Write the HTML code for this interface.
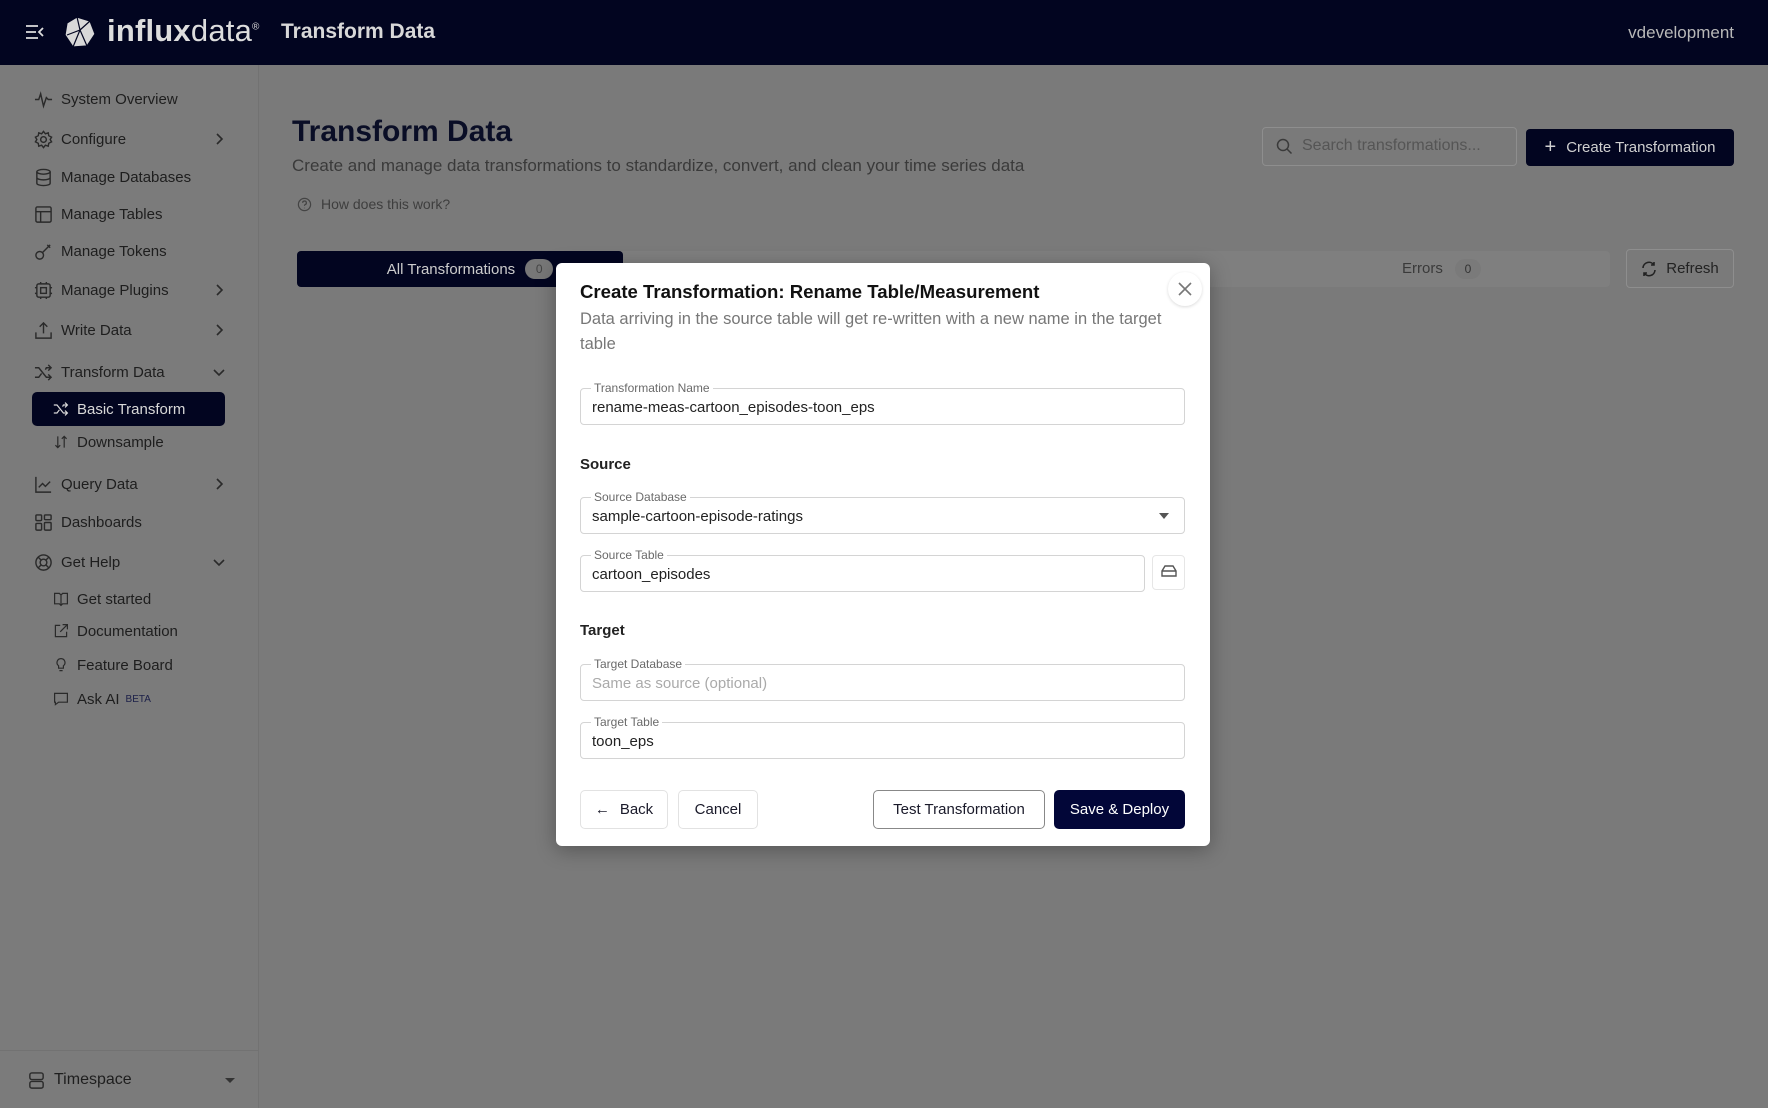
<!DOCTYPE html>
<html><head><meta charset="utf-8"><style>
*{box-sizing:border-box;margin:0;padding:0}
body{width:1768px;height:1108px;overflow:hidden;background:#7a7a7a;font-family:"Liberation Sans",sans-serif;position:relative;color:#1c1c1c}
.a{position:absolute}
.hdr{left:0;top:0;width:1768px;height:65px;background:#020520}
.side{left:0;top:65px;width:259px;height:1043px;background:#7b7b7b;border-right:1px solid #727272}
.nav{position:absolute;left:34px;font-size:15px;color:#1e1e1e;display:flex;align-items:center;height:20px;transform:translateY(-50%)}
.nav svg{width:19px;height:19px;margin-right:8px;stroke:#2a2a2a;fill:none;stroke-width:1.5}
.sub{left:53px}
.sub svg{width:16px;height:16px}
.chev{position:absolute;left:212px;width:14px;height:14px;transform:translateY(-50%);stroke:#2a2a2a;fill:none;stroke-width:1.6}
.field{position:absolute;left:580px;width:605px;height:37px;border:1px solid #d4d4d4;border-radius:4px;background:#fff}
.field .lb{position:absolute;left:10px;top:-8px;background:#fff;padding:0 3px;font-size:12px;color:#6a6a6a;line-height:14px}
.field .v{position:absolute;left:11px;top:10px;font-size:15px;color:#222}
.btn{position:absolute;top:790px;height:39px;border:1px solid #e2e2e2;border-radius:5px;font-size:15px;display:flex;align-items:center;justify-content:center;color:#1a1a2a;background:#fff}
</style></head><body>
<div class="a hdr">
 <svg class="a" style="left:25px;top:24px" width="20" height="16" viewBox="0 0 20 16" stroke="#ddd" stroke-width="1.8" fill="none"><path d="M1 2h12M1 8h10M1 14h12M18 4l-4 4 4 4"/></svg>
 <svg class="a" style="left:63px;top:15px" width="34" height="34" viewBox="0 0 34 34" fill="#d8d8d8" stroke="#020520" stroke-width="1.2"><path d="M14 2l13 4 5 13-8 12-14 1L2 20 4 8z"/><path d="M14 2l3 13-13 5M17 15l10-9M17 15l7 16M17 15l-7 17" fill="none"/></svg>
 <div class="a" style="left:107px;top:13px;font-size:31px;color:#ddd;letter-spacing:0.2px"><b>influx</b>data<sup style="font-size:10px">®</sup></div>
 <div class="a" style="left:281px;top:20px;font-size:21px;font-weight:bold;color:#d8d8d8">Transform Data</div>
 <div class="a" style="right:34px;top:23px;font-size:17px;color:#b8b8b8">vdevelopment</div>
</div>
<div class="a side"></div>
<div class="nav" style="top:99px"><svg viewBox="0 0 20 20"><path d="M1 10h4l2-6 3 13 3-9 2 2h4"/></svg>System Overview</div>
<div class="nav" style="top:139px"><svg viewBox="0 0 20 20"><circle cx="10" cy="10" r="3"/><path d="M10 1.5l2 2.5 3-1 .5 3 3 1.5-1.5 2.5 1.5 2.5-3 1.5-.5 3-3-1-2 2.5-2-2.5-3 1-.5-3-3-1.5L3 10 1.5 7.5l3-1.5.5-3 3 1z"/></svg>Configure</div>
<svg class="chev" style="top:139px" viewBox="0 0 14 14"><path d="M5 2l5 5-5 5"/></svg>
<div class="nav" style="top:177px"><svg viewBox="0 0 20 20"><ellipse cx="10" cy="4" rx="7" ry="2.5"/><path d="M3 4v12c0 1.4 3 2.5 7 2.5s7-1.1 7-2.5V4M3 10c0 1.4 3 2.5 7 2.5s7-1.1 7-2.5"/></svg>Manage Databases</div>
<div class="nav" style="top:214px"><svg viewBox="0 0 20 20"><rect x="2" y="2" width="16" height="16" rx="1.5"/><path d="M2 7h16M7 7v11"/></svg>Manage Tables</div>
<div class="nav" style="top:251px"><svg viewBox="0 0 20 20"><circle cx="6" cy="14" r="4"/><path d="M9 11l8-8M14 3l3 3"/></svg>Manage Tokens</div>
<div class="nav" style="top:290px"><svg viewBox="0 0 20 20"><rect x="3" y="3" width="14" height="14" rx="2"/><rect x="7" y="7" width="6" height="6"/><path d="M7 1v2M13 1v2M7 17v2M13 17v2M1 7h2M1 13h2M17 7h2M17 13h2"/></svg>Manage Plugins</div>
<svg class="chev" style="top:290px" viewBox="0 0 14 14"><path d="M5 2l5 5-5 5"/></svg>
<div class="nav" style="top:330px"><svg viewBox="0 0 20 20"><path d="M10 13V2M6 6l4-4 4 4M2 12v6h16v-6"/></svg>Write Data</div>
<svg class="chev" style="top:330px" viewBox="0 0 14 14"><path d="M5 2l5 5-5 5"/></svg>
<div class="nav" style="top:372px"><svg viewBox="0 0 20 20"><path d="M1 5h4l8 10h5M1 15h4l3-4M12 7l1-2h5M15 2l3 3-3 3M15 12l3 3-3 3"/></svg>Transform Data</div>
<svg class="chev" style="top:372px" viewBox="0 0 14 14"><path d="M2 5l5 5 5-5"/></svg>
<div class="a" style="left:32px;top:392px;width:193px;height:34px;background:#020520;border-radius:5px"></div>
<div class="nav sub" style="top:409px;color:#d8d8d8"><svg viewBox="0 0 20 20" style="stroke:#d8d8d8"><path d="M1 5h4l8 10h5M1 15h4l3-4M12 7l1-2h5M15 2l3 3-3 3M15 12l3 3-3 3"/></svg>Basic Transform</div>
<div class="nav sub" style="top:442px"><svg viewBox="0 0 20 20"><path d="M6 3v14M3 14l3 3 3-3M14 17V3M11 6l3-3 3 3"/></svg>Downsample</div>
<div class="nav" style="top:484px"><svg viewBox="0 0 20 20"><path d="M2 2v16h16M5 13l4-4 3 3 5-5"/></svg>Query Data</div>
<svg class="chev" style="top:484px" viewBox="0 0 14 14"><path d="M5 2l5 5-5 5"/></svg>
<div class="nav" style="top:522px"><svg viewBox="0 0 20 20"><rect x="2" y="2" width="6" height="6" rx="1"/><rect x="11" y="2" width="7" height="5" rx="1"/><rect x="2" y="11" width="6" height="7" rx="1"/><rect x="11" y="10" width="7" height="8" rx="1"/></svg>Dashboards</div>
<div class="nav" style="top:562px"><svg viewBox="0 0 20 20"><circle cx="10" cy="10" r="8"/><circle cx="10" cy="10" r="3.5"/><path d="M4.5 4.5l3 3M15.5 4.5l-3 3M4.5 15.5l3-3M15.5 15.5l-3-3"/></svg>Get Help</div>
<svg class="chev" style="top:562px" viewBox="0 0 14 14"><path d="M2 5l5 5 5-5"/></svg>
<div class="nav sub" style="top:599px"><svg viewBox="0 0 20 20"><path d="M2 3h6l2 2 2-2h6v13h-6l-2 2-2-2H2zM10 5v13"/></svg>Get started</div>
<div class="nav sub" style="top:631px"><svg viewBox="0 0 20 20"><path d="M9 3H3v14h14v-6M12 2h6v6M18 2l-9 9"/></svg>Documentation</div>
<div class="nav sub" style="top:665px"><svg viewBox="0 0 20 20"><path d="M10 2a5 5 0 0 0-3 9v3h6v-3a5 5 0 0 0-3-9zM8 17h4"/></svg>Feature Board</div>
<div class="nav sub" style="top:699px"><svg viewBox="0 0 20 20"><path d="M2 3h16v11H7l-4 3v-3H2z"/></svg>Ask AI <sup style="font-size:10px;color:#1b1f48;margin-left:6px">BETA</sup></div>
<div class="a" style="left:0;top:1050px;width:259px;border-top:1px solid #727272"></div>
<div class="nav" style="top:1080px;left:27px;font-size:16px"><svg viewBox="0 0 20 20"><rect x="3" y="2" width="14" height="7" rx="2"/><rect x="3" y="11" width="14" height="7" rx="2"/></svg>Timespace</div>
<div class="a" style="left:225px;top:1078px;border:5px solid transparent;border-top:5px solid #333"></div>

<div class="a" style="left:292px;top:115px;font-size:30px;font-weight:bold;color:#0a0e26">Transform Data</div>
<div class="a" style="left:292px;top:156px;font-size:17px;color:#3a3a3a">Create and manage data transformations to standardize, convert, and clean your time series data</div>
<svg class="a" style="left:297px;top:197px" width="15" height="15" viewBox="0 0 16 16" fill="none" stroke="#444" stroke-width="1.3"><circle cx="8" cy="8" r="6.5"/><path d="M6 6.2a2 2 0 1 1 2.5 2c-.5.2-.5.6-.5 1.3M8 11.5v.5"/></svg>
<div class="a" style="left:321px;top:196px;font-size:14px;color:#3e3e3e">How does this work?</div>
<div class="a" style="left:1262px;top:127px;width:255px;height:39px;border:1px solid #8e8e8e;border-radius:4px"></div>
<svg class="a" style="left:1276px;top:138px" width="17" height="17" viewBox="0 0 17 17" fill="none" stroke="#3a3a3a" stroke-width="1.5"><circle cx="7" cy="7" r="5.5"/><path d="M11 11l4.5 4.5"/></svg>
<div class="a" style="left:1302px;top:137px;font-size:16px;color:#555">Search transformations...</div>
<div class="a" style="left:1526px;top:129px;width:208px;height:37px;background:#020520;border-radius:4px;color:#d0d0d0;font-size:15px;display:flex;align-items:center;justify-content:center"><span style="font-size:20px;margin-right:10px;font-weight:300">+</span>Create Transformation</div>
<div class="a" style="left:297px;top:251px;width:1313px;height:36px;background:#7f7f7f;border-radius:4px"></div>
<div class="a" style="left:297px;top:251px;width:326px;height:36px;background:#020520;border-radius:4px;color:#ccc;font-size:15px;display:flex;align-items:center;justify-content:center;padding-left:20px">All Transformations <span style="display:inline-block;margin-left:10px;background:#777;color:#444;border-radius:10px;width:28px;height:20px;text-align:center;font-size:12px;line-height:20px">0</span></div>
<div class="a" style="left:1402px;top:260px;font-size:15px;color:#3a3a3a">Errors</div>
<div class="a" style="left:1455px;top:259px;width:26px;height:20px;background:#7a7a7a;border-radius:10px;font-size:12px;color:#333;text-align:center;line-height:20px">0</div>
<div class="a" style="left:1626px;top:249px;width:108px;height:39px;border:1px solid #8e8e8e;border-radius:4px;font-size:15px;color:#222;display:flex;align-items:center;justify-content:center"><svg width="16" height="16" viewBox="0 0 16 16" fill="none" stroke="#222" stroke-width="1.6" style="margin-right:9px"><path d="M2 7a6 6 0 0 1 11-3M14 9a6 6 0 0 1-11 3M13 1v3h-3M3 15v-3h3"/></svg>Refresh</div>

<div class="a" style="left:556px;top:263px;width:654px;height:583px;background:#fff;border-radius:6px;box-shadow:0 4px 20px rgba(0,0,0,.3)"></div>
<div class="a" style="left:580px;top:281px;font-size:18.6px;color:#111;font-weight:600">Create Transformation: Rename Table/Measurement</div>
<div class="a" style="left:1168px;top:272px;width:34px;height:34px;border-radius:50%;box-shadow:0 1px 3px rgba(0,0,0,.15);background:#fff"></div>
<svg class="a" style="left:1177px;top:281px" width="16" height="16" viewBox="0 0 16 16" stroke="#777" stroke-width="1.6"><path d="M2 2l12 12M14 2L2 14"/></svg>
<div class="a" style="left:580px;top:307px;width:605px;font-size:16.5px;color:#777;line-height:25px">Data arriving in the source table will get re-written with a new name in the target table</div>
<div class="field" style="top:388px"><span class="lb">Transformation Name</span><span class="v">rename-meas-cartoon_episodes-toon_eps</span></div>
<div class="a" style="left:580px;top:456px;font-size:15px;font-weight:bold;color:#222">Source</div>
<div class="field" style="top:497px"><span class="lb">Source Database</span><span class="v">sample-cartoon-episode-ratings</span><span style="position:absolute;right:15px;top:15px;border:5px solid transparent;border-top:6px solid #555"></span></div>
<div class="field" style="top:555px;width:565px"><span class="lb">Source Table</span><span class="v">cartoon_episodes</span></div>
<div class="a" style="left:1152px;top:555px;width:33px;height:35px;border:1px solid #e6e6e6;border-radius:4px"></div>
<svg class="a" style="left:1161px;top:564px" width="16" height="14" viewBox="0 0 16 14" fill="none" stroke="#555" stroke-width="1.4"><path d="M4 2h8l3 5v5H1V7zM1 7h14"/></svg>
<div class="a" style="left:580px;top:622px;font-size:15px;font-weight:bold;color:#222">Target</div>
<div class="field" style="top:664px"><span class="lb">Target Database</span><span class="v" style="color:#aaa">Same as source (optional)</span></div>
<div class="field" style="top:722px"><span class="lb">Target Table</span><span class="v">toon_eps</span></div>
<div class="btn" style="left:580px;width:88px"><span style="margin-right:10px">←</span>Back</div>
<div class="btn" style="left:678px;width:80px">Cancel</div>
<div class="btn" style="left:873px;width:172px;border-color:#888">Test Transformation</div>
<div class="btn" style="left:1054px;width:131px;background:#020638;color:#fff;border-color:#020638">Save &amp; Deploy</div>
</body></html>
